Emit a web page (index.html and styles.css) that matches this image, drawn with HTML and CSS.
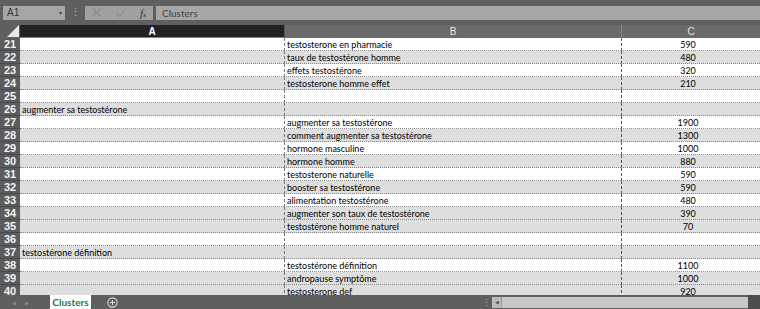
FILE: index.html
```html
<!DOCTYPE html>
<html lang="fr">
<head>
<meta charset="UTF-8" />
<title>Clusters</title>
<link rel="stylesheet" href="styles.css">
</head>
<body>

<div class="toolbar">
  <div class="namebox">A1<span class="caret">&#9662;</span></div>
  <div class="vdots">&#8942;</div>
  <div class="btns">
    <span class="btn"><svg width="11" height="11" viewBox="0 0 11 11"><path d="M1.5 1.5 L9.5 9.5 M9.5 1.5 L1.5 9.5" stroke="#8a8a8a" stroke-width="1.1"/></svg></span>
    <span class="btn"><svg width="12" height="11" viewBox="0 0 12 11"><path d="M1 6 L4.5 9.5 L11 1.5" fill="none" stroke="#8a8a8a" stroke-width="1.1"/></svg></span>
    <span class="btn fx"><i>f</i><small>x</small></span>
  </div>
  <div class="formula">Clusters</div>
</div>

<div class="colhead">
  <div class="corner"><svg width="12" height="12" viewBox="0 0 12 12"><path d="M12 0 L12 12 L0 12 Z" fill="#e8e8e8"/></svg></div>
  <div class="ch a sel">A</div>
  <div class="ch b">B</div>
  <div class="ch c">C</div>
</div>

<div class="grid">
  <div class="row"><div class="rh">21</div><div class="cell a"></div><div class="cell b">testosterone en pharmacie</div><div class="cell c">590</div></div>
  <div class="row g"><div class="rh">22</div><div class="cell a"></div><div class="cell b">taux de testostérone homme</div><div class="cell c">480</div></div>
  <div class="row"><div class="rh">23</div><div class="cell a"></div><div class="cell b">effets testostérone</div><div class="cell c">320</div></div>
  <div class="row g"><div class="rh">24</div><div class="cell a"></div><div class="cell b">testosterone homme effet</div><div class="cell c">210</div></div>
  <div class="row"><div class="rh">25</div><div class="cell a"></div><div class="cell b"></div><div class="cell c"></div></div>
  <div class="row g"><div class="rh">26</div><div class="cell a">augmenter sa testostérone</div><div class="cell b"></div><div class="cell c"></div></div>
  <div class="row"><div class="rh">27</div><div class="cell a"></div><div class="cell b">augmenter sa testostérone</div><div class="cell c">1900</div></div>
  <div class="row g"><div class="rh">28</div><div class="cell a"></div><div class="cell b">comment augmenter sa testostérone</div><div class="cell c">1300</div></div>
  <div class="row"><div class="rh">29</div><div class="cell a"></div><div class="cell b">hormone masculine</div><div class="cell c">1000</div></div>
  <div class="row g"><div class="rh">30</div><div class="cell a"></div><div class="cell b">hormone homme</div><div class="cell c">880</div></div>
  <div class="row"><div class="rh">31</div><div class="cell a"></div><div class="cell b">testosterone naturelle</div><div class="cell c">590</div></div>
  <div class="row g"><div class="rh">32</div><div class="cell a"></div><div class="cell b">booster sa testostérone</div><div class="cell c">590</div></div>
  <div class="row"><div class="rh">33</div><div class="cell a"></div><div class="cell b">alimentation testostérone</div><div class="cell c">480</div></div>
  <div class="row g"><div class="rh">34</div><div class="cell a"></div><div class="cell b">augmenter son taux de testostérone</div><div class="cell c">390</div></div>
  <div class="row g"><div class="rh">35</div><div class="cell a"></div><div class="cell b">testostérone homme naturel</div><div class="cell c">70</div></div>
  <div class="row"><div class="rh">36</div><div class="cell a"></div><div class="cell b"></div><div class="cell c"></div></div>
  <div class="row g"><div class="rh">37</div><div class="cell a">testostérone définition</div><div class="cell b"></div><div class="cell c"></div></div>
  <div class="row"><div class="rh">38</div><div class="cell a"></div><div class="cell b">testostérone définition</div><div class="cell c">1100</div></div>
  <div class="row g"><div class="rh">39</div><div class="cell a"></div><div class="cell b">andropause symptôme</div><div class="cell c">1000</div></div>
  <div class="row g"><div class="rh">40</div><div class="cell a"></div><div class="cell b">testosterone def</div><div class="cell c">920</div></div>
</div>

<div class="sheetbar">
  <div class="nav"><span>&#9664;</span><span>&#9654;</span></div>
  <div class="tab">Clusters</div>
  <div class="add"><svg width="11" height="11" viewBox="0 0 11 11"><circle cx="5.5" cy="5.5" r="4.6" fill="none" stroke="#e0e0e0" stroke-width="1.1"/><path d="M5.5 3 V8 M3 5.5 H8" stroke="#e0e0e0" stroke-width="1.1"/></svg></div>
  <div class="spacer"></div>
  <div class="vdots small">&#8942;</div>
  <div class="hscroll">
    <span class="larr">&#9664;</span>
    <div class="track"></div>
  </div>
  <div class="endbox"></div>
</div>

</body>
</html>
```

FILE: styles.css
```css
body { margin:0; background:#5f5f5f; font-family: "Liberation Sans", Arial, sans-serif; width:760px; height:309px; overflow:hidden; }

.toolbar { height:25px; display:flex; align-items:center; background:#5f5f5f; }
.namebox {
  margin-left:3px; width:62px; height:14px; background:#a6a6a6; color:#333;
  font-size:10px; line-height:14px; padding-left:4px; box-sizing:border-box; position:relative;
}
.namebox .caret { position:absolute; right:3px; top:0; font-size:6px; color:#444; }
.vdots { width:20px; text-align:center; color:#bdbdbd; font-size:11px; }
.btns {
  width:68px; height:14px; background:#a0a0a0; display:flex; justify-content:space-around; align-items:center;
  color:#8a8a8a; font-size:9px;
}
.btn { display:flex; }
.btn.fx { color:#333; font-family:"Liberation Serif", serif; font-size:11px; }
.btn.fx small { font-size:7px; margin-top:4px; }
.formula {
  margin-left:3px; flex:1; height:14px; background:#a7a7a7; color:#444;
  font-family:"Lato", "Liberation Sans", sans-serif; font-size:10px; line-height:14px; padding-left:6px;
}

.colhead { height:13px; display:flex; background:#6a6a6a; }
.corner { width:20px; display:flex; align-items:flex-end; justify-content:flex-end; padding:0 1px 1px 0; box-sizing:border-box; background:#5f5f5f; }
.ch { text-align:center; font-size:10px; line-height:13px; color:#e6e6e6; box-sizing:border-box; }
.ch.sel { background:#222; color:#fff; font-weight:bold; border-bottom:1px solid #3aa870; }
.ch.b { border-left:1px solid #555; }
.ch.c { border-left:1px solid #8a8a8a; }

.a { width:264px; }
.b { width:337px; }
.c { flex:1; }

.grid { height:257px; overflow:hidden; }
.row { display:flex; height:13px; background:#fff; }
.row.g { background:#dedede; }
.rh {
  width:20px; background:#5c5c5c; color:#f2f2f2; font-size:11px; font-weight:bold; line-height:13px;
  text-align:center; border-bottom:1px solid #4a4a4a; box-sizing:border-box;
}
.cell {
  font-family: "Lato", "Liberation Sans", sans-serif; font-size:9px; line-height:13px; color:#000;
  border-bottom:1px dotted #888; box-sizing:border-box; padding-left:2px; white-space:nowrap; overflow:hidden;
}
.cell.b { border-left:1px dashed #777; }
.cell.c { border-left:1px dashed #555; text-align:center; padding-right:8px; }

.sheetbar { height:15px; display:flex; align-items:center; background:#5f5f5f; }
.nav { width:50px; display:flex; gap:9px; padding-left:12px; box-sizing:border-box; color:#8c8c8c; font-size:5px; }
.tab {
  width:41px; height:15px; background:#fff; color:#1e7a45; font-weight:bold;
  font-family:"Lato", "Liberation Sans", sans-serif; font-size:10px; text-align:center; line-height:14px;
  border-bottom:1px solid #2e9a5a; box-sizing:border-box;
}
.add { width:23px; display:flex; justify-content:center; padding-left:10px; }
.spacer { flex:1; }
.vdots.small { width:12px; font-size:9px; }
.hscroll { width:256px; height:11px; display:flex; background:#c8c8c8; }
.larr { width:9px; font-size:5px; color:#555; line-height:11px; text-align:center; background:#bcbcbc; border-right:1px solid #a0a0a0; }
.track { flex:1; }
.endbox { width:12px; height:15px; background:#4d4d4d; }
```
